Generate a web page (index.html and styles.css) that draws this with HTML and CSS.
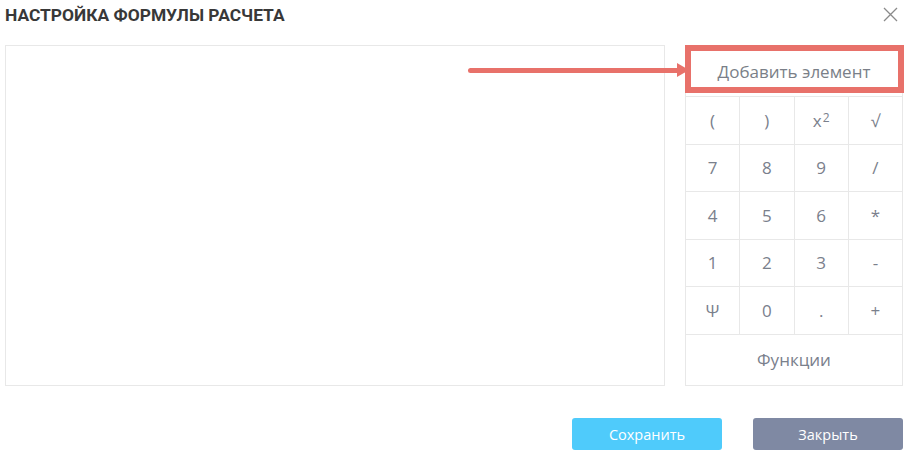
FILE: index.html
```html
<!DOCTYPE html>
<html lang="ru">
<head>
  <meta charset="UTF-8" />
  <title>Настройка формулы расчета</title>
  <link rel="stylesheet" href="styles.css">
</head>
<body>

  <div class="modal">
    <div class="modal-header">
      <h1>НАСТРОЙКА ФОРМУЛЫ РАСЧЕТА</h1>
      <button class="close-x" aria-label="Закрыть">
        <svg width="15" height="15" viewBox="0 0 15 15">
          <path d="M1 1 L14 14 M14 1 L1 14" stroke="#8a8a8a" stroke-width="1.3" fill="none"/>
        </svg>
      </button>
    </div>

    <div class="modal-body">
      <div class="formula-area">
        <!-- arrow annotation -->
        <div class="arrow"></div>
      </div>

      <div class="keypad">
        <div class="add-element">
          Добавить элемент
          <div class="highlight"></div>
        </div>
        <div class="keys">
          <div class="key">(</div>
          <div class="key">)</div>
          <div class="key">x<sup>2</sup></div>
          <div class="key">√</div>
          <div class="key">7</div>
          <div class="key">8</div>
          <div class="key">9</div>
          <div class="key">/</div>
          <div class="key">4</div>
          <div class="key">5</div>
          <div class="key">6</div>
          <div class="key">*</div>
          <div class="key">1</div>
          <div class="key">2</div>
          <div class="key">3</div>
          <div class="key">-</div>
          <div class="key">Ψ</div>
          <div class="key">0</div>
          <div class="key">.</div>
          <div class="key">+</div>
          <div class="key wide">Функции</div>
        </div>
      </div>
    </div>

    <div class="modal-footer">
      <button class="btn btn-save">Сохранить</button>
      <button class="btn btn-close">Закрыть</button>
    </div>
  </div>

</body>
</html>
```

FILE: styles.css
```css
/* BASE */
* {
  box-sizing: border-box;
  margin: 0;
  padding: 0;
}

body {
  font-family: "Open Sans", Arial, sans-serif;
  background: #fff;
  width: 907px;
  height: 454px;
  overflow: hidden;
}

.modal {
  padding: 0 4px 0 5px;
}

/* HEADER */
.modal-header {
  height: 45px;
  display: flex;
  justify-content: space-between;
  align-items: flex-start;
}

.modal-header h1 {
  font-family: Roboto, Arial, sans-serif;
  font-size: 17.4px;
  font-weight: bold;
  color: #383838;
  margin-top: 5px;
}

.close-x {
  border: none;
  background: none;
  margin-top: 7px;
  margin-right: 5px;
  width: 16px;
  height: 16px;
}

/* BODY */
.modal-body {
  display: flex;
  gap: 20px;
  height: 341px;
}

.formula-area {
  flex: 1;
  border: 1px solid #e8e8e8;
  position: relative;
}

.arrow {
  position: absolute;
  left: 462px;
  top: 22px;
  width: 217px;
  height: 5px;
  background: #e8716a;
  border-radius: 3px;
}

.arrow::after {
  content: '';
  position: absolute;
  right: -4px;
  top: -5px;
  border-left: 12px solid #e8716a;
  border-top: 7.5px solid transparent;
  border-bottom: 7.5px solid transparent;
}

.keypad {
  width: 218px;
  display: flex;
  flex-direction: column;
}

.add-element {
  height: 52px;
  border: 1px solid #e8e8e8;
  display: flex;
  align-items: center;
  justify-content: center;
  font-size: 17px;
  color: #7a7f88;
  position: relative;
}

.highlight {
  position: absolute;
  left: -1px;
  top: -1px;
  right: -2px;
  bottom: 3px;
  border: 6px solid #e8716a;
}

.keys {
  flex: 1;
  display: grid;
  grid-template-columns: repeat(4, 1fr);
  grid-template-rows: repeat(5, 47.5px) 1fr;
  border-left: 1px solid #e8e8e8;
  border-bottom: 1px solid #e8e8e8;
}

.key {
  display: flex;
  align-items: center;
  justify-content: center;
  border-right: 1px solid #e8e8e8;
  border-bottom: 1px solid #e8e8e8;
  font-size: 17px;
  color: #7a808c;
}

.key sup {
  font-size: 12px;
  margin-left: 1px;
  position: relative;
  top: -3px;
}

.key.wide {
  grid-column: span 4;
  border-bottom: none;
}

/* FOOTER */
.modal-footer {
  display: flex;
  justify-content: flex-end;
  gap: 31px;
  margin-top: 32px;
}

.btn {
  width: 150px;
  height: 32px;
  border: none;
  border-radius: 3px;
  color: #fff;
  font-family: "Open Sans", Arial, sans-serif;
  font-size: 14.5px;
}

.btn-save {
  background: #4fcbfb;
}

.btn-close {
  background: #7f89a3;
}
```
